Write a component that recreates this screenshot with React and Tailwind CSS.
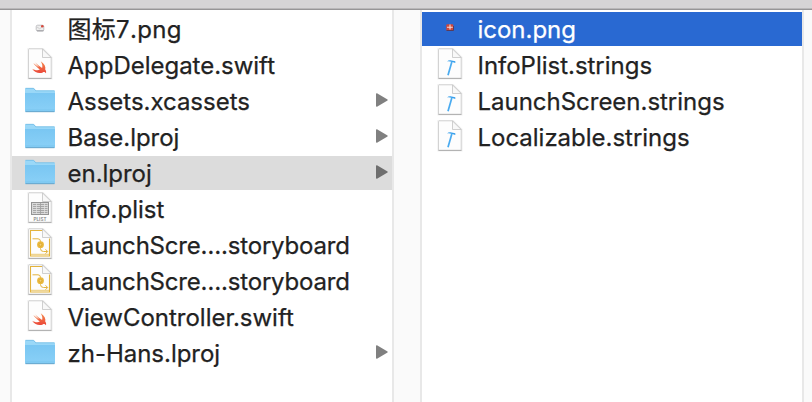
import React from "react";

function Page({ children }) {
  return (
    <svg viewBox="0 0 32 34" className="h-[34px] w-8 shrink-0">
      <path d="M4.500 1H19l8.500 8.500V30.500H4.500Z" fill="none" stroke="#000" strokeOpacity=".06" strokeWidth="2.200" />
      <path d="M5 .8H18.500L27.200 9.500V30.200H4.500V1.300Z" fill="#fdfdfd" stroke="#c9c9c9" strokeWidth=".8" />
      <path d="M4.500 30.500H27.500" stroke="#b3b3b3" strokeWidth="1" />
      {children}
      <path d="M18.500 1V9.500H27.200Z" fill="#f8f8f8" stroke="#c4c4c4" strokeWidth=".8" />
    </svg>
  );
}

function SwiftIcon() {
  return (
    <Page>
      <defs>
        <linearGradient id="swift" x1="0" y1="0" x2="0" y2="1">
          <stop offset="0" stopColor="#f58a4c" />
          <stop offset="1" stopColor="#ea4538" />
        </linearGradient>
      </defs>
      <path
        d="M16.700 13.300C20.500 15.700 22 19 21.200 21.400C22.400 22.900 22.300 24.400 21.900 25.300C21 23.900 19.700 23.900 18.800 24.400C15.400 26 10.800 24.700 8.200 20.700C10.800 22.300 13.800 22.700 15.800 21.500C13.200 19.500 10.900 17 9.300 14.900C11.500 16.800 13.600 18.400 15.100 19.300C13.600 17.700 12.100 15.900 11.100 14.300C13.300 16.500 15.900 18.700 18.100 20C18.800 18 18.100 15.500 16.700 13.300Z"
        fill="url(#swift)"
      />
    </Page>
  );
}

function FolderIcon() {
  return (
    <svg viewBox="0 0 32 34" className="h-[34px] w-8 shrink-0">
      <defs>
        <linearGradient id="folder" x1="0" y1="0" x2="0" y2="1">
          <stop offset="0" stopColor="#79c6f2" />
          <stop offset="1" stopColor="#8ad0f7" />
        </linearGradient>
      </defs>
      <path d="M1 5Q1 4 2 4H9Q10 4 10.700 5L12 6.600H30Q31 6.600 31 7.600V12H1Z" fill="#9bd8f8" />
      <path d="M1.500 4.300H9.500L11.800 6.800H30.500" fill="none" stroke="#6cb8e2" strokeWidth=".7" />
      <path d="M1 8.500H31V27Q31 28 30 28H2Q1 28 1 27Z" fill="url(#folder)" />
      <path d="M1 8.400H31" stroke="#9fdaf9" strokeWidth=".8" />
      <path d="M1.500 26H30.500" stroke="#74c0eb" strokeWidth=".7" />
      <path d="M1.500 27.700H30.500" stroke="#629fc5" strokeWidth=".9" />
    </svg>
  );
}

function PlistIcon() {
  return (
    <Page>
      <rect x="7.500" y="10.500" width="17" height="12" fill="#d9d9d9" stroke="#949494" />
      <path d="M9 12.500H23.500M9 14.500H23.500M9 16.500H23.500M9 18.500H23.500M9 20.500H23.500" stroke="#a6a6a6" strokeWidth="1" />
      <path d="M16.500 11V22" stroke="#a0a0a0" strokeWidth=".8" />
      <path d="M12.500 11V22M20.500 11V22" stroke="#e2e2e2" strokeWidth=".7" />
      <text x="16" y="29" textAnchor="middle" fontSize="4.600" fontWeight="600" fontFamily="Inter, sans-serif" fill="#858585">
        PLIST
      </text>
    </Page>
  );
}

function StoryboardIcon() {
  return (
    <Page>
      <g fill="none" stroke="#e3b33c">
        <path d="M18.500 2.500H6.500V28H25.500V10.500" strokeWidth="1.100" />
        <path d="M7 26.300H25" strokeWidth=".7" />
        <path d="M8.500 10.800H14Q16.500 10.800 16.500 13.500V20.500Q16.500 23.500 19.500 23.500H23.500" strokeWidth="1" />
        <path d="M21.500 21.300L23.700 23.500L21.500 25.700" strokeWidth="1" />
      </g>
      <circle cx="16.500" cy="16.700" r="3.400" fill="#eab93e" />
      <circle cx="16.500" cy="16.700" r="1.400" fill="#f3cf73" stroke="#d19a1b" strokeWidth=".6" />
    </Page>
  );
}

function StringsIcon() {
  return (
    <Page>
      <path d="M17.800 14L14 27.300" stroke="#4aabf0" strokeWidth="1.700" fill="none" />
      <path d="M13.200 13.500Q14 12.100 16.500 12.200L21.300 13.200V15L19 14.200L16 13.600Q14.500 13 13.200 13.500Z" fill="#38a0ec" />
    </Page>
  );
}

function MailThumb() {
  return (
    <svg viewBox="0 0 32 34" className="h-[34px] w-8 shrink-0">
      <rect x="12.200" y="13.200" width="7.600" height="5.800" rx="1.400" fill="#eee" stroke="#b4b4b8" strokeWidth=".8" />
      <path d="M13 18.800H19.500" stroke="#8d8d92" strokeWidth=".8" />
      <path d="M13 15L15.700 16.800L18 15" fill="none" stroke="#bbb" strokeWidth=".6" />
      <circle cx="18.300" cy="14.300" r="1.300" fill="#d8493c" />
    </svg>
  );
}

function GiftThumb() {
  return (
    <svg viewBox="0 0 32 34" className="h-[34px] w-8 shrink-0">
      <rect x="12.300" y="12.300" width="7" height="6.500" rx="1" fill="#d0473c" />
      <path d="M12.500 18.500H19.500V14" fill="none" stroke="#5b3a58" strokeWidth="1" />
      <path d="M16 12.500V17.500M13 15.200H18.800" stroke="#f4dcd7" strokeWidth="1.100" />
    </svg>
  );
}

const left = [
  { name: "图标7.png", Icon: MailThumb, track: "tracking-[0.3px] [font-kerning:none]" },
  { name: "AppDelegate.swift", Icon: SwiftIcon },
  { name: "Assets.xcassets", Icon: FolderIcon, folder: true },
  { name: "Base.lproj", Icon: FolderIcon, folder: true },
  { name: "en.lproj", Icon: FolderIcon, folder: true, open: true },
  { name: "Info.plist", Icon: PlistIcon },
  { name: "LaunchScre….storyboard", Icon: StoryboardIcon, track: "tracking-[-0.2px]" },
  { name: "LaunchScre….storyboard", Icon: StoryboardIcon, track: "tracking-[-0.2px]" },
  { name: "ViewController.swift", Icon: SwiftIcon },
  { name: "zh-Hans.lproj", Icon: FolderIcon, folder: true },
];

const right = [
  { name: "icon.png", Icon: GiftThumb, selected: true },
  { name: "InfoPlist.strings", Icon: StringsIcon },
  { name: "LaunchScreen.strings", Icon: StringsIcon },
  { name: "Localizable.strings", Icon: StringsIcon },
];

function Row({ item }) {
  const { name, Icon, folder, open, selected, track = "tracking-[-0.02px]" } = item;
  const tone = selected ? "bg-[#2969d2] text-white" : open ? "bg-[#dcdcdc] text-[#222]" : "text-[#222]";
  return (
    <li className={`flex h-[34px] items-center pr-1 pl-3 ${tone}`}>
      <Icon />
      <span className={`ml-[11.5px] flex-1 whitespace-nowrap pt-0.5 leading-8 [-webkit-text-stroke:0.25px_currentColor] ${track}`}>
        {name}
      </span>
      {folder && (
        <svg viewBox="0 0 12 14" className={`mb-0.5 h-3.5 w-3 ${open ? "text-[#6e6e6e]" : "text-[#808080]"}`}>
          <path d="M0 1Q0 0 1 .2L11.500 6.400Q12 7 11.500 7.600L1 13.800Q0 14 0 13Z" fill="currentColor" />
        </svg>
      )}
    </li>
  );
}

function Column({ items }) {
  return (
    <ul className="flex w-[384px] shrink-0 flex-col gap-0.5 border-x-2 border-[#e8e8e8] bg-white pt-0.5">
      {items.map((item, i) => (
        <Row key={i} item={item} />
      ))}
    </ul>
  );
}

export default function App() {
  return (
    <div className="flex h-[402px] w-[812px] flex-col overflow-hidden bg-[#fafafa] font-['Inter','Noto_Sans_CJK_SC',sans-serif] text-[24px]">
      <div className="h-[9px] shrink-0 border-b border-[#b9b7b9] bg-[#d6d4d6]" />
      <div className="h-px shrink-0 bg-[#979597]" />
      <main className="flex flex-1 gap-[26px] pl-2.5">
        <Column items={left} />
        <Column items={right} />
      </main>
    </div>
  );
}
